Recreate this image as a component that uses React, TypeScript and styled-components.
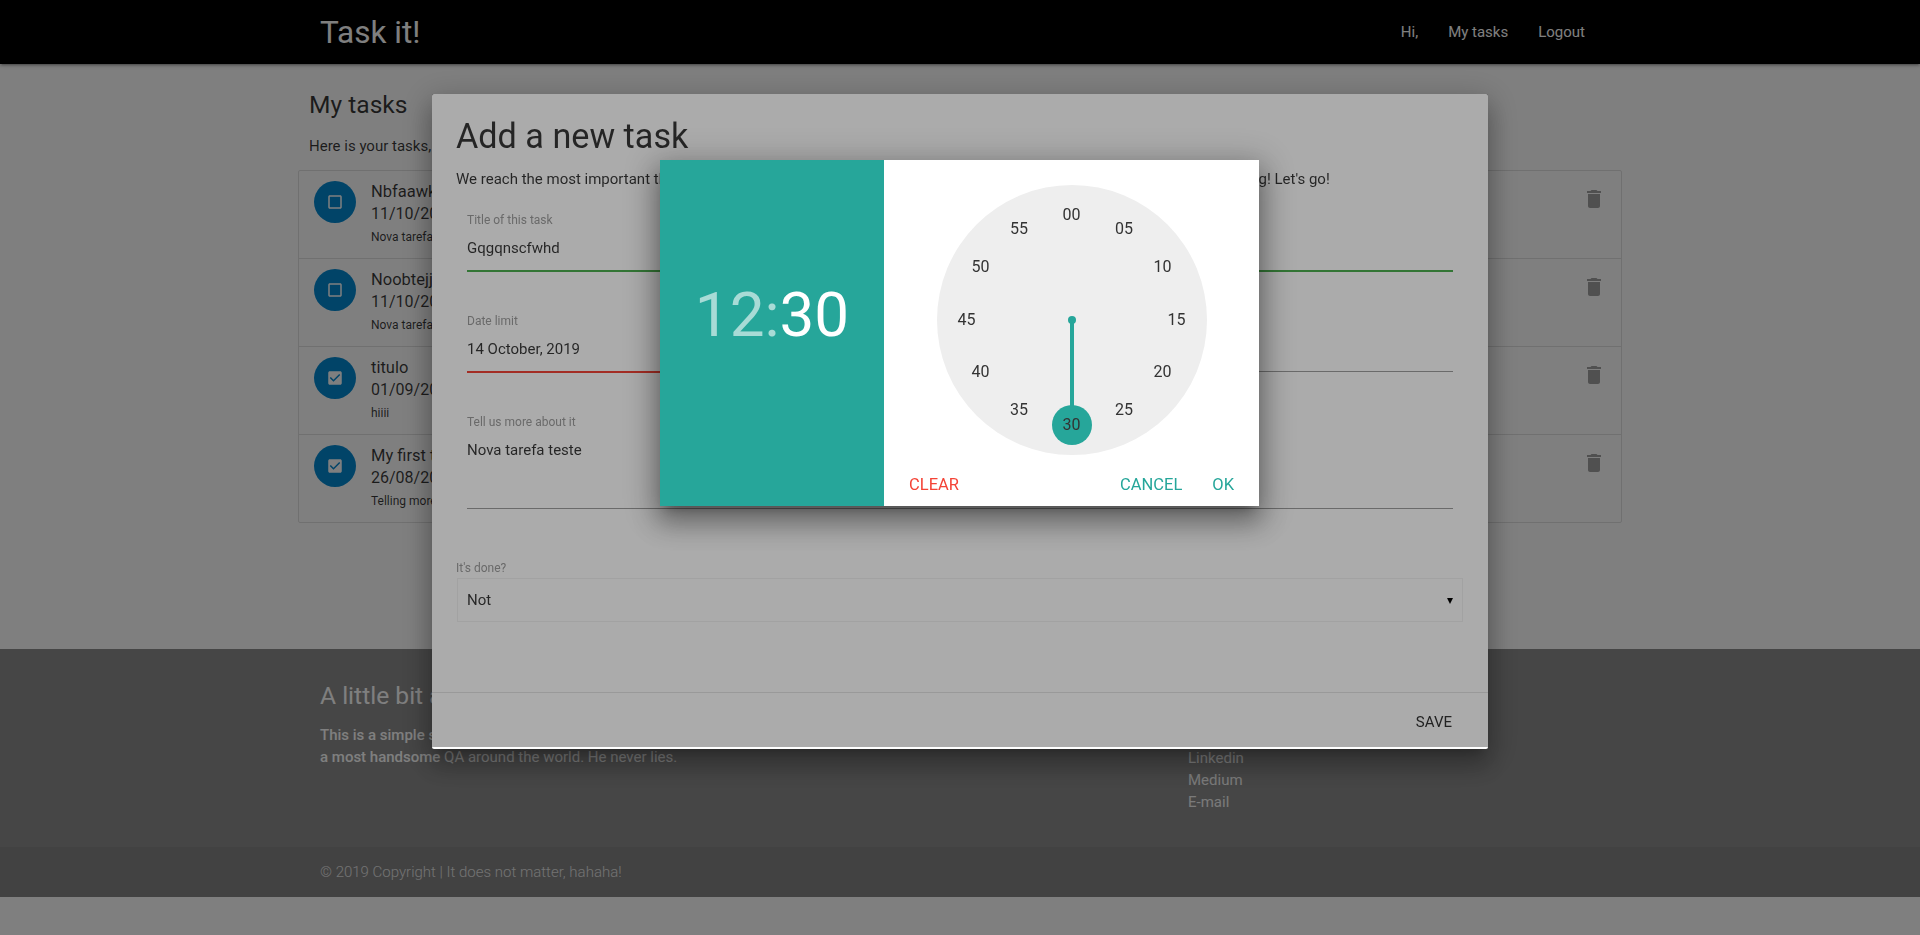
import React from "react";
import styled, { createGlobalStyle } from "styled-components";

const GlobalStyle = createGlobalStyle`
  html, body {
    margin: 0;
    padding: 0;
    background: #fff;
    font-family: Roboto, "Liberation Sans", sans-serif;
    color: rgba(0, 0, 0, 0.78);
  }
  * {
    box-sizing: border-box;
  }
`;

const tasks = [
  { title: "Nbfaawkjhg", date: "11/10/2019", text: "Nova tarefa teste", done: false },
  { title: "Noobtejjvb", date: "11/10/2019", text: "Nova tarefa teste", done: false },
  { title: "titulo", date: "01/09/2019", text: "hiiii", done: true },
  { title: "My first task", date: "26/08/2019", text: "Telling more about it", done: true },
];

const minutes = ["00", "05", "10", "15", "20", "25", "30", "35", "40", "45", "50", "55"];

const CheckIcon: React.FC<{ done: boolean }> = ({ done }) => (
  <svg width="18" height="18" viewBox="0 0 24 24" fill="#fff">
    {done ? (
      <path d="M19 3H5c-1.11 0-2 .9-2 2v14c0 1.1.89 2 2 2h14c1.11 0 2-.9 2-2V5c0-1.1-.89-2-2-2zm-9 14l-5-5 1.41-1.41L10 14.17l7.59-7.59L19 8l-9 9z" />
    ) : (
      <path d="M19 5v14H5V5h14m0-2H5c-1.1 0-2 .9-2 2v14c0 1.1.9 2 2 2h14c1.1 0 2-.9 2-2V5c0-1.1-.9-2-2-2z" />
    )}
  </svg>
);

const TrashIcon: React.FC = () => (
  <svg width="24" height="24" viewBox="0 0 24 24" fill="#a0a0a0">
    <path d="M6 19c0 1.1.9 2 2 2h8c1.1 0 2-.9 2-2V7H6v12zM19 4h-3.5l-1-1h-5l-1 1H5v2h14V4z" />
  </svg>
);

const App: React.FC = () => {
  return (
    <>
      <GlobalStyle />
      <Header>
        <HeaderInner>
          <Brand>Task it!</Brand>
          <Nav>
            <NavLink>Hi,</NavLink>
            <NavLink>My tasks</NavLink>
            <NavLink>Logout</NavLink>
          </Nav>
        </HeaderInner>
      </Header>

      <Main>
        <PageTitle>My tasks</PageTitle>
        <PageIntro>Here is your tasks,</PageIntro>
        <TaskList>
          {tasks.map((task) => (
            <TaskRow key={task.title}>
              <Avatar>
                <CheckIcon done={task.done} />
              </Avatar>
              <TaskBody>
                <TaskTitle>{task.title}</TaskTitle>
                <TaskDate>{task.date}</TaskDate>
                <TaskText>{task.text}</TaskText>
              </TaskBody>
              <TrashIcon />
            </TaskRow>
          ))}
        </TaskList>
      </Main>

      <Footer>
        <FooterInner>
          <FooterAbout>
            <FooterTitle>A little bit about it</FooterTitle>
            <FooterText>
              <strong>This is a simple system to keep your tasks, built and tested by</strong>
              <br />
              <strong>a most handsome</strong> QA around the world. He never lies.
            </FooterText>
          </FooterAbout>
          <FooterLinks>
            <FooterLink>Github</FooterLink>
            <FooterLink>Linkedin</FooterLink>
            <FooterLink>Medium</FooterLink>
            <FooterLink>E-mail</FooterLink>
          </FooterLinks>
        </FooterInner>
      </Footer>
      <Copyright>
        <CopyrightText>© 2019 Copyright | It does not matter, hahaha!</CopyrightText>
      </Copyright>

      <PageOverlay />

      <Modal>
        <ModalContent>
          <ModalTitle>Add a new task</ModalTitle>
          <ModalIntro>
            We reach the most important thing of this page, let's write down a new task and keep everything
            in your lists really working! Let's go!
          </ModalIntro>
          <Field>
            <FieldLabel>Title of this task</FieldLabel>
            <FieldValue>Gqgqnscfwhd</FieldValue>
            <ValidLine />
          </Field>
          <Field>
            <FieldLabel>Date limit</FieldLabel>
            <FieldValue>14 October, 2019</FieldValue>
            <SplitLine>
              <InvalidPart />
              <PlainPart />
            </SplitLine>
          </Field>
          <Field>
            <FieldLabel>Tell us more about it</FieldLabel>
            <AreaValue>Nova tarefa teste</AreaValue>
            <PlainLine />
          </Field>
          <SelectLabel>It's done?</SelectLabel>
          <SelectBox>
            Not
            <SelectArrow>▾</SelectArrow>
          </SelectBox>
        </ModalContent>
        <ModalFooter>
          <SaveButton>Save</SaveButton>
        </ModalFooter>

        <ModalOverlay />

        <Picker>
          <PickerHeader>
            <PickerTime>
              <PickerHour>12:</PickerHour>30
            </PickerTime>
          </PickerHeader>
          <PickerBody>
            <ClockFace>
              <ClockHand viewBox="0 0 270 270" width="270" height="270">
                <line x1="135" y1="135" x2="135" y2="240" stroke="#26a69a" strokeWidth="4" />
                <circle cx="135" cy="135" r="4" fill="#26a69a" />
                <circle cx="135" cy="240" r="20" fill="#26a69a" />
              </ClockHand>
              {minutes.map((label, i) => {
                const angle = (i * 30 * Math.PI) / 180;
                return (
                  <ClockTick
                    key={label}
                    style={{
                      left: 135 + Math.sin(angle) * 105,
                      top: 133.5 - Math.cos(angle) * 105,
                    }}
                  >
                    {label}
                  </ClockTick>
                );
              })}
            </ClockFace>
            <PickerActions>
              <PickerButton $danger>Clear</PickerButton>
              <PickerRight>
                <PickerButton>Cancel</PickerButton>
                <PickerButton>Ok</PickerButton>
              </PickerRight>
            </PickerActions>
          </PickerBody>
        </Picker>
      </Modal>
    </>
  );
};

const Header = styled.header`
  height: 64px;
  background: #000;
  box-shadow: 0 2px 2px 0 rgba(0, 0, 0, 0.14), 0 3px 1px -2px rgba(0, 0, 0, 0.12), 0 1px 5px 0 rgba(0, 0, 0, 0.2);
`;

const HeaderInner = styled.div`
  width: 1280px;
  height: 100%;
  margin: 0 auto;
  display: flex;
  align-items: center;
  justify-content: space-between;
`;

const Brand = styled.div`
  font-size: 31.5px;
  color: #fff;
`;

const Nav = styled.nav`
  display: flex;
  align-items: center;
`;

const NavLink = styled.a`
  padding: 0 15px;
  font-size: 15px;
  color: #fff;
`;

const Main = styled.main`
  width: 1324px;
  height: 585px;
  margin: 0 auto;
  padding-top: 25px;
`;

const PageTitle = styled.h2`
  margin: 0 0 0 11px;
  font-size: 24.6px;
  font-weight: 400;
  line-height: 32px;
`;

const PageIntro = styled.p`
  margin: 13px 0 0 11px;
  font-size: 15px;
  line-height: 24px;
`;

const TaskList = styled.ul`
  list-style: none;
  margin: 12px 0 0;
  padding: 0;
  border: 1px solid #e0e0e0;
  border-radius: 2px;
`;

const TaskRow = styled.li`
  height: 88px;
  display: flex;
  align-items: flex-start;
  padding: 10px 15px 0 15px;
  border-bottom: 1px solid #e0e0e0;
  &:last-child {
    height: 87px;
    border-bottom: none;
  }
  > svg {
    margin-top: 6px;
  }
`;

const Avatar = styled.div`
  width: 42px;
  height: 42px;
  flex: none;
  border-radius: 50%;
  background: #0288d1;
  display: flex;
  align-items: center;
  justify-content: center;
`;

const TaskBody = styled.div`
  flex: 1;
  padding-left: 15px;
`;

const TaskTitle = styled.div`
  font-size: 16.5px;
  line-height: 22px;
`;

const TaskDate = styled.div`
  font-size: 16px;
  line-height: 21px;
`;

const TaskText = styled.div`
  margin-top: 4px;
  font-size: 12px;
  line-height: 18px;
`;

const Footer = styled.footer`
  height: 198px;
  background: #8c8c8c;
`;

const FooterInner = styled.div`
  width: 1280px;
  margin: 0 auto;
  padding-top: 31px;
  display: flex;
`;

const FooterAbout = styled.div`
  width: 868px;
`;

const FooterTitle = styled.h5`
  margin: 0;
  font-size: 24.6px;
  font-weight: 400;
  line-height: 32px;
  color: #fff;
`;

const FooterText = styled.p`
  margin: 12px 0 0;
  font-size: 15px;
  line-height: 22px;
  color: #f5f5f5;
  strong {
    font-weight: 500;
    color: #fff;
  }
`;

const FooterLinks = styled.div`
  display: flex;
  flex-direction: column;
  padding-top: 45px;
`;

const FooterLink = styled.a`
  font-size: 15px;
  line-height: 22px;
  color: #f5f5f5;
`;

const Copyright = styled.div`
  height: 50px;
  background: #858585;
  display: flex;
  align-items: center;
`;

const CopyrightText = styled.div`
  width: 1280px;
  margin: 0 auto;
  font-size: 15px;
  font-weight: 300;
  color: rgba(255, 255, 255, 0.8);
`;

const PageOverlay = styled.div`
  position: fixed;
  inset: 0;
  background: rgba(0, 0, 0, 0.5);
`;

const Modal = styled.div`
  position: fixed;
  top: 94px;
  left: 432px;
  width: 1056px;
  height: 655px;
  background: #fff;
  border-radius: 2px;
  display: flex;
  flex-direction: column;
  box-shadow: 0 16px 24px 2px rgba(0, 0, 0, 0.2), 0 6px 30px 5px rgba(0, 0, 0, 0.18), 0 8px 10px -7px rgba(0, 0, 0, 0.25);
`;

const ModalContent = styled.div`
  flex: 1;
  padding: 24px;
`;

const ModalTitle = styled.h4`
  margin: 0;
  font-size: 34.2px;
  font-weight: 400;
  line-height: 36px;
`;

const ModalIntro = styled.p`
  margin: 14px 0 0;
  font-size: 15px;
  line-height: 22px;
  white-space: nowrap;
`;

const Field = styled.div`
  margin: 0 11px 42px;
  &:first-of-type {
    margin-top: 23px;
  }
`;

const FieldLabel = styled.div`
  font-size: 12px;
  line-height: 14px;
  color: #9e9e9e;
`;

const FieldValue = styled.div`
  margin-top: 12px;
  height: 31px;
  font-size: 15px;
  line-height: 18px;
`;

const AreaValue = styled(FieldValue)`
  height: 67px;
`;

const ValidLine = styled.div`
  height: 2px;
  background: #4caf50;
`;

const SplitLine = styled.div`
  height: 2px;
  display: flex;
  align-items: flex-start;
`;

const InvalidPart = styled.div`
  width: 50%;
  height: 2px;
  background: #f44336;
`;

const PlainPart = styled.div`
  flex: 1;
  height: 1px;
  background: #9e9e9e;
`;

const PlainLine = styled.div`
  height: 1px;
  background: #9e9e9e;
`;

const SelectLabel = styled.div`
  margin-top: -32px;
  padding-top: 42px;
  font-size: 12px;
  line-height: 14px;
  color: #9e9e9e;
`;

const SelectBox = styled.div`
  margin: 3px 1px 0;
  width: 1006px;
  height: 44px;
  padding: 0 9px;
  display: flex;
  align-items: center;
  justify-content: space-between;
  border: 1px solid #f2f2f2;
  background: rgba(255, 255, 255, 0.9);
  font-size: 15px;
`;

const SelectArrow = styled.span`
  font-size: 12px;
  color: #000;
  font-family: "DejaVu Sans", sans-serif;
`;

const ModalFooter = styled.div`
  height: 57px;
  padding: 2px 24px 0 0;
  display: flex;
  align-items: center;
  justify-content: flex-end;
  border-top: 1px solid rgba(0, 0, 0, 0.1);
`;

const SaveButton = styled.button`
  border: none;
  background: none;
  padding: 0 12px;
  font: 400 15px Roboto, sans-serif;
  text-transform: uppercase;
  color: #343434;
`;

const ModalOverlay = styled.div`
  position: absolute;
  inset: 0 0 2px 0;
  background: rgba(0, 0, 0, 0.33);
`;

const Picker = styled.div`
  position: absolute;
  top: 66px;
  left: 228px;
  width: 599px;
  height: 346px;
  display: flex;
  background: #fff;
  box-shadow: 0 16px 24px 2px rgba(0, 0, 0, 0.26), 0 6px 30px 5px rgba(0, 0, 0, 0.24), 0 8px 10px -7px rgba(0, 0, 0, 0.3);
`;

const PickerHeader = styled.div`
  width: 224px;
  flex: none;
  background: #26a69a;
  display: flex;
  justify-content: center;
  padding-top: 118px;
`;

const PickerTime = styled.div`
  font-size: 62px;
  font-weight: 400;
  line-height: 74px;
  color: #fff;
`;

const PickerHour = styled.span`
  color: rgba(255, 255, 255, 0.6);
`;

const PickerBody = styled.div`
  flex: 1;
  display: flex;
  flex-direction: column;
  align-items: center;
  padding-top: 25px;
`;

const ClockFace = styled.div`
  position: relative;
  width: 270px;
  height: 270px;
  border-radius: 50%;
  background: #eee;
`;

const ClockHand = styled.svg`
  position: absolute;
  inset: 0;
`;

const ClockTick = styled.span`
  position: absolute;
  transform: translate(-50%, -50%);
  font-size: 16px;
  color: #333;
`;

const PickerActions = styled.div`
  align-self: stretch;
  display: flex;
  justify-content: space-between;
  align-items: center;
  margin-top: 18px;
  padding: 0 25px;
`;

const PickerRight = styled.div`
  display: flex;
  gap: 30px;
`;

const PickerButton = styled.button<{ $danger?: boolean }>`
  border: none;
  background: none;
  padding: 0;
  font: 400 16.5px Roboto, sans-serif;
  line-height: 24px;
  text-transform: uppercase;
  color: ${({ $danger }) => ($danger ? "#f44336" : "#26a69a")};
`;

export default App;
